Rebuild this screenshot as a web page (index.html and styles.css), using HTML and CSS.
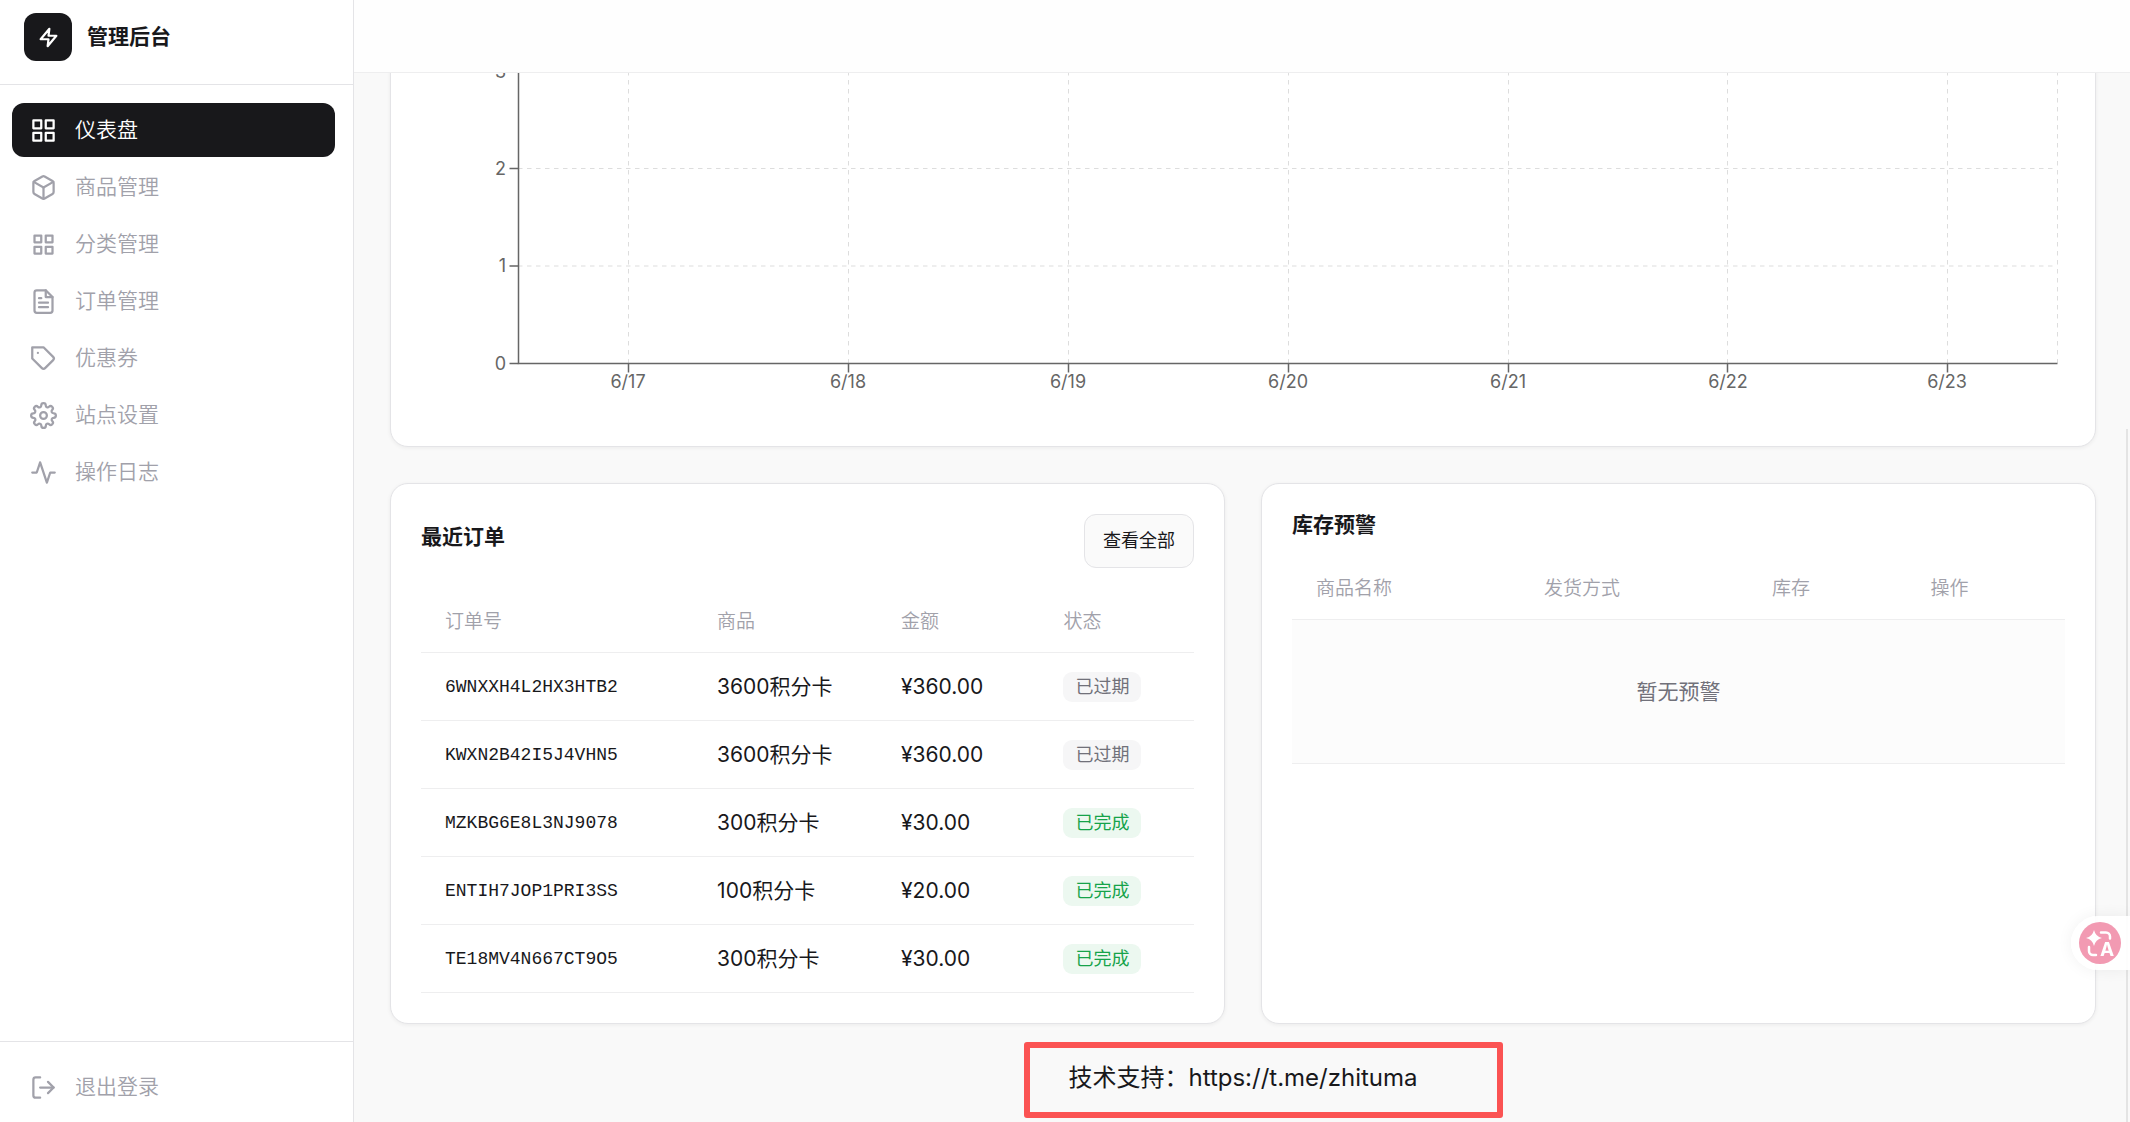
FILE: index.html
```html
<!DOCTYPE html>
<html lang="zh-CN">
<head>
    <meta charset="UTF-8">
    <meta name="viewport" content="width=device-width, initial-scale=1.0">
    <title>管理后台</title>
    <link rel="stylesheet" href="styles.css">
</head>
<body>
    <div class="layout">
        <!-- 侧边栏 -->
        <aside class="sidebar">
            <div class="sidebar-header">
                <div class="logo">
                    <svg class="logo-icon" viewBox="0 0 24 24"><path d="M13 2L3 14h9l-1 8 10-12h-9l1-8z"/></svg>
                </div>
                <h1 class="brand">管理后台</h1>
            </div>
            <nav class="nav">
                <a href="#" class="nav-item active">
                    <svg class="icon" viewBox="0 0 24 24"><rect x="3" y="3" width="7" height="7"/><rect x="14" y="3" width="7" height="7"/><rect x="14" y="14" width="7" height="7"/><rect x="3" y="14" width="7" height="7"/></svg>
                    <span>仪表盘</span>
                </a>
                <a href="#" class="nav-item">
                    <svg class="icon" viewBox="0 0 24 24"><path d="M21 16V8a2 2 0 0 0-1-1.73l-7-4a2 2 0 0 0-2 0l-7 4A2 2 0 0 0 3 8v8a2 2 0 0 0 1 1.73l7 4a2 2 0 0 0 2 0l7-4A2 2 0 0 0 21 16z"/><path d="M3.3 7l8.7 5 8.7-5"/><path d="M12 22V12"/></svg>
                    <span>商品管理</span>
                </a>
                <a href="#" class="nav-item">
                    <svg class="icon" viewBox="0 0 24 24"><rect x="4" y="4" width="6" height="6"/><rect x="14" y="4" width="6" height="6"/><rect x="14" y="14" width="6" height="6"/><rect x="4" y="14" width="6" height="6"/></svg>
                    <span>分类管理</span>
                </a>
                <a href="#" class="nav-item">
                    <svg class="icon" viewBox="0 0 24 24"><path d="M14 2H6a2 2 0 0 0-2 2v16a2 2 0 0 0 2 2h12a2 2 0 0 0 2-2V8z"/><path d="M14 2v6h6"/><path d="M16 13H8"/><path d="M16 17H8"/><path d="M10 9H8"/></svg>
                    <span>订单管理</span>
                </a>
                <a href="#" class="nav-item">
                    <svg class="icon" viewBox="0 0 24 24"><path d="M20.59 13.41l-7.17 7.17a2 2 0 0 1-2.83 0L2 12V2h10l8.59 8.59a2 2 0 0 1 0 2.82z"/><path d="M7 7h.01"/></svg>
                    <span>优惠券</span>
                </a>
                <a href="#" class="nav-item">
                    <svg class="icon" viewBox="0 0 24 24"><circle cx="12" cy="12" r="3"/><path d="M19.4 15a1.65 1.65 0 0 0 .33 1.82l.06.06a2 2 0 0 1-2.83 2.83l-.06-.06a1.65 1.65 0 0 0-1.82-.33 1.65 1.65 0 0 0-1 1.51V21a2 2 0 0 1-4 0v-.09A1.65 1.65 0 0 0 9 19.4a1.65 1.65 0 0 0-1.82.33l-.06.06a2 2 0 0 1-2.83-2.83l.06-.06a1.65 1.65 0 0 0 .33-1.82 1.65 1.65 0 0 0-1.51-1H3a2 2 0 0 1 0-4h.09A1.65 1.65 0 0 0 4.6 9a1.65 1.65 0 0 0-.33-1.82l-.06-.06a2 2 0 0 1 2.83-2.83l.06.06a1.65 1.65 0 0 0 1.82.33H9a1.65 1.65 0 0 0 1-1.51V3a2 2 0 0 1 4 0v.09a1.65 1.65 0 0 0 1 1.51 1.65 1.65 0 0 0 1.82-.33l.06-.06a2 2 0 0 1 2.83 2.83l-.06.06a1.65 1.65 0 0 0-.33 1.82V9a1.65 1.65 0 0 0 1.51 1H21a2 2 0 0 1 0 4h-.09a1.65 1.65 0 0 0-1.51 1z"/></svg>
                    <span>站点设置</span>
                </a>
                <a href="#" class="nav-item">
                    <svg class="icon" viewBox="0 0 24 24"><path d="M22 12h-4l-3 9L9 3l-3 9H2"/></svg>
                    <span>操作日志</span>
                </a>
            </nav>
            <div class="sidebar-footer">
                <button type="button" class="nav-item">
                    <svg class="icon" viewBox="0 0 24 24"><path d="M9 21H5a2 2 0 0 1-2-2V5a2 2 0 0 1 2-2h4"/><path d="M16 17l5-5-5-5"/><path d="M21 12H9"/></svg>
                    <span>退出登录</span>
                </button>
            </div>
        </aside>

        <div class="main">
            <header class="topbar"></header>
            <main class="content">
                <!-- 趋势图 -->
                <section class="card">
                    <svg class="chart" viewBox="0 0 1644 352">
                        <g class="grid">
                            <path d="M97 7H1636M97 104.5H1636M97 202H1636"/>
                            <path d="M207.5 7V299M427.5 7V299M647.5 7V299M867.5 7V299M1087.5 7V299M1306.5 7V299M1526.5 7V299M1636.5 7V299"/>
                        </g>
                        <g class="axis">
                            <path d="M97.5 7V299.5H1636.5"/>
                            <path d="M88.5 7h9M88.5 104.5h9M88.5 202h9M88.5 299.5h9"/>
                            <path d="M207.5 299.5v9M427.5 299.5v9M647.5 299.5v9M867.5 299.5v9M1087.5 299.5v9M1306.5 299.5v9M1526.5 299.5v9"/>
                        </g>
                        <g class="label label-y">
                            <text x="85" y="14">3</text>
                            <text x="85" y="111">2</text>
                            <text x="85" y="208">1</text>
                            <text x="85" y="306">0</text>
                        </g>
                        <g class="label label-x">
                            <text x="207" y="324">6/17</text>
                            <text x="427" y="324">6/18</text>
                            <text x="647" y="324">6/19</text>
                            <text x="867" y="324">6/20</text>
                            <text x="1087" y="324">6/21</text>
                            <text x="1307" y="324">6/22</text>
                            <text x="1526" y="324">6/23</text>
                        </g>
                    </svg>
                </section>

                <div class="panels">
                    <section class="card">
                        <div class="card-head">
                            <h2 class="card-title">最近订单</h2>
                            <button type="button" class="btn">查看全部</button>
                        </div>
                        <table class="table orders">
                            <thead>
                                <tr><th class="col-no">订单号</th><th class="col-product">商品</th><th class="col-amount">金额</th><th>状态</th></tr>
                            </thead>
                            <tbody>
                                <tr><td class="mono">6WNXXH4L2HX3HTB2</td><td>3600积分卡</td><td>¥360.00</td><td><span class="badge">已过期</span></td></tr>
                                <tr><td class="mono">KWXN2B42I5J4VHN5</td><td>3600积分卡</td><td>¥360.00</td><td><span class="badge">已过期</span></td></tr>
                                <tr><td class="mono">MZKBG6E8L3NJ9078</td><td>300积分卡</td><td>¥30.00</td><td><span class="badge success">已完成</span></td></tr>
                                <tr><td class="mono">ENTIH7JOP1PRI3SS</td><td>100积分卡</td><td>¥20.00</td><td><span class="badge success">已完成</span></td></tr>
                                <tr><td class="mono">TE18MV4N667CT9O5</td><td>300积分卡</td><td>¥30.00</td><td><span class="badge success">已完成</span></td></tr>
                            </tbody>
                        </table>
                    </section>

                    <section class="card">
                        <h2 class="card-title">库存预警</h2>
                        <table class="table stock">
                            <thead>
                                <tr><th class="col-name">商品名称</th><th class="col-name">发货方式</th><th>库存</th><th>操作</th></tr>
                            </thead>
                            <tbody>
                                <tr><td class="empty" colspan="4">暂无预警</td></tr>
                            </tbody>
                        </table>
                    </section>
                </div>

                <footer class="support">
                    <p class="support-text">技术支持：https://t.me/zhituma</p>
                </footer>
            </main>
        </div>
    </div>

    <div class="scroll-thumb"></div>
    <button type="button" class="translate" aria-label="翻译">
        <svg class="translate-icon" viewBox="0 0 42 42">
            <circle cx="21" cy="21" r="21" fill="#f29ab2"/>
            <path d="M15 8q1.500 6.500 8 8q-6.500 1.500-8 8q-1.500-6.500-8-8q6.500-1.500 8-8z" fill="#fff"/>
            <path d="M22 10.500h5a4 4 0 0 1 4 4v2M10 25v4a4 4 0 0 0 4 4h3" fill="none" stroke="#fff" stroke-width="2.500" stroke-linecap="round"/>
            <text x="28" y="34" class="translate-letter">A</text>
        </svg>
    </button>
</body>
</html>
```

FILE: styles.css
```css
:root {
    --dark: #18181b;
    --gray: #71717a;
    --muted: #a1a1aa;
    --border: #e4e4e7;
    --line: #eeeeef;
    --bg: #f9f9f9;
    --success: #16a34a;
    --danger: #fb5353;
}

* {
    box-sizing: border-box;
    margin: 0;
    padding: 0;
}

body {
    font-family: Inter, "Noto Sans CJK SC", sans-serif;
    font-size: 21px;
    line-height: 30px;
    color: var(--dark);
    background: var(--bg);
}

button {
    font: inherit;
    color: inherit;
    border: none;
    background: none;
    cursor: pointer;
}

.layout {
    display: flex;
    height: 100vh;
}

/* 侧边栏 */
.sidebar {
    display: flex;
    flex-direction: column;
    flex: 0 0 354px;
    background: #fff;
    border-right: 1px solid var(--border);
}

.sidebar-header {
    display: flex;
    align-items: center;
    gap: 15px;
    padding: 13px 24px 23px;
    border-bottom: 1px solid var(--border);
}

.logo {
    display: flex;
    align-items: center;
    justify-content: center;
    width: 48px;
    height: 48px;
    border-radius: 12px;
    background: var(--dark);
}

.logo-icon {
    width: 21px;
    height: 21px;
    fill: none;
    stroke: #fff;
    stroke-width: 2.5;
    stroke-linecap: round;
    stroke-linejoin: round;
}

.brand {
    font-size: 21px;
    font-weight: 700;
}

.nav {
    display: flex;
    flex-direction: column;
    flex: 1;
    gap: 3px;
    padding: 18px 18px 18px 12px;
}

.nav-item {
    display: flex;
    align-items: center;
    gap: 18px;
    width: 100%;
    padding: 12px 18px;
    border-radius: 12px;
    color: var(--muted);
    font-weight: 350;
    text-decoration: none;
}

.nav-item.active {
    color: #fff;
    background: var(--dark);
}

.icon {
    width: 27px;
    height: 27px;
    fill: none;
    stroke: currentColor;
    stroke-width: 2;
    stroke-linecap: round;
    stroke-linejoin: round;
}

.sidebar-footer {
    padding: 18px 18px 8px 12px;
    border-top: 1px solid var(--border);
}

/* 主区域 */
.main {
    display: flex;
    flex-direction: column;
    flex: 1;
    min-width: 0;
}

.topbar {
    flex: 0 0 73px;
    background: #fefefe;
    border-bottom: 1px solid var(--line);
}

/* 内容贴底显示，超出的部分在顶栏下裁掉 */
.content {
    display: flex;
    flex-direction: column;
    flex: 1;
    justify-content: flex-end;
    min-height: 0;
    padding: 0 34px 0 36px;
    overflow: hidden;
}

.card {
    padding: 30px;
    border: 1px solid var(--border);
    border-radius: 18px;
    background: #fff;
    box-shadow: 0 1px 4px rgba(0, 0, 0, 0.06);
}

.card-head {
    display: flex;
    align-items: center;
    justify-content: space-between;
    margin-bottom: 24px;
}

.card-title {
    margin-bottom: 8px;
    font-size: 21px;
    font-weight: 700;
    line-height: 22px;
}

.btn {
    padding: 11px 18px;
    border: 1px solid var(--border);
    border-radius: 12px;
    background: #fafafa;
    font-size: 18px;
}

/* 图表 */
.chart {
    display: block;
    width: 100%;
}

.grid {
    fill: none;
    stroke: #ddd;
    stroke-dasharray: 4.5 4.5;
}

.axis {
    fill: none;
    stroke: #666;
    stroke-width: 1.5;
}

.label {
    font-size: 18px;
    fill: #666;
}

.label-y {
    text-anchor: end;
}

.label-x {
    text-anchor: middle;
}

/* 表格 */
.panels {
    display: grid;
    grid-template-columns: 1fr 1fr;
    gap: 36px;
    margin-top: 36px;
}

.table {
    width: 100%;
    table-layout: fixed;
    border-collapse: separate;
    border-spacing: 0;
}

.table th,
.table td {
    padding: 0 24px;
    border-bottom: 1px solid var(--line);
    text-align: left;
    white-space: nowrap;
}

.table th {
    height: 61px;
    color: var(--muted);
    font-size: 19px;
    font-weight: 350;
}

.table td {
    height: 68px;
}

.col-no {
    width: 35.2%;
}

.col-product {
    width: 23.8%;
}

.col-amount {
    width: 21%;
}

.col-name {
    width: 29.5%;
}

.table .mono {
    font-family: "Liberation Mono", monospace;
    font-size: 18px;
}

.stock {
    margin-top: 23px;
}

.table .empty {
    height: 144px;
    color: var(--gray);
    background: #fcfcfc;
    text-align: center;
}

.badge {
    display: inline-block;
    padding: 0 12px;
    border-radius: 9px;
    color: var(--gray);
    background: #f6f6f7;
    font-size: 18px;
    vertical-align: middle;
}

.badge.success {
    color: var(--success);
    background: #ecf8f0;
}

/* 技术支持 */
.support {
    display: flex;
    justify-content: center;
    padding: 36px 0 26px;
}

.support-text {
    position: relative;
    font-size: 24px;
    line-height: 36px;
}

.support-text::after {
    content: "";
    position: absolute;
    inset: -18px -85px -22px -44px;
    border: 6px solid var(--danger);
    border-radius: 3px;
}

/* 悬浮元素 */
.scroll-thumb {
    position: fixed;
    top: 429px;
    right: 2px;
    bottom: 0;
    width: 2px;
    background: #e4e4e4;
}

.translate {
    position: fixed;
    right: 0;
    bottom: 152px;
    display: flex;
    align-items: center;
    padding: 6px 9px 6px 8px;
    border-radius: 27px 0 0 27px;
    background: rgba(255, 255, 255, 0.9);
    box-shadow: 0 0 16px rgba(0, 0, 0, 0.06);
}

.translate-icon {
    width: 42px;
    height: 42px;
}

.translate-letter {
    fill: #fff;
    font-size: 19px;
    font-weight: 700;
    text-anchor: middle;
}
```
